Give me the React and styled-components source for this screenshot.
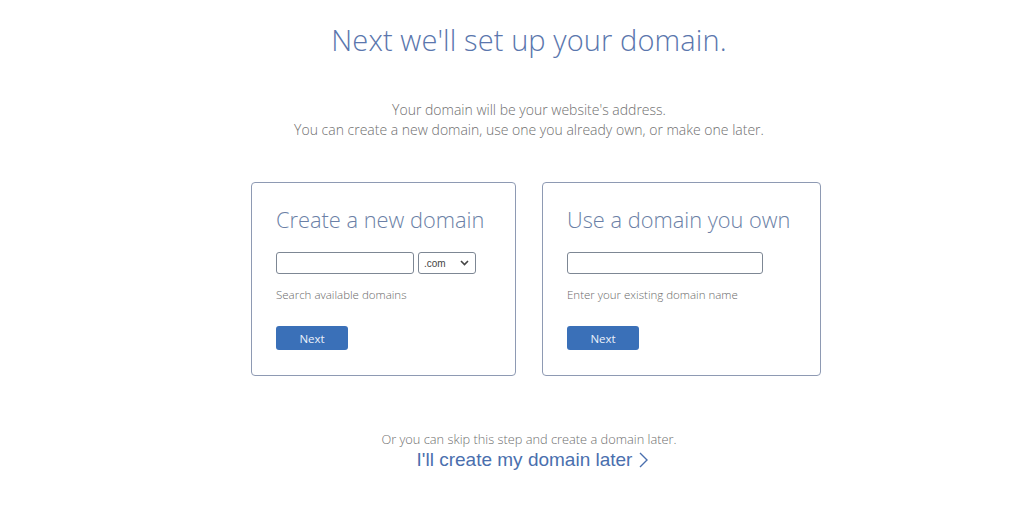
import React from "react";
import styled, { createGlobalStyle } from "styled-components";

const GlobalStyle = createGlobalStyle`
  html, body {
    margin: 0;
    padding: 0;
    background: #ffffff;
  }
  body {
    font-family: "Open Sans", "Liberation Sans", sans-serif;
  }
  * {
    box-sizing: border-box;
  }
`;

function DomainCard({ title, helper, withSelect, inputWidth, width }) {
  return (
    <Card $width={width}>
      <CardTitle>{title}</CardTitle>
      <Fields>
        <TextInput type="text" $width={inputWidth} />
        {withSelect && (
          <SelectBox>
            <span>.com</span>
            <svg width="9" height="6" viewBox="0 0 9 6">
              <path
                d="M1 1l3.5 3.5L8 1"
                fill="none"
                stroke="#444"
                strokeWidth="1.6"
              />
            </svg>
          </SelectBox>
        )}
      </Fields>
      <Helper>{helper}</Helper>
      <NextButton>Next</NextButton>
    </Card>
  );
}

export default function App() {
  return (
    <>
      <GlobalStyle />
      <Page>
        <Heading>Next we'll set up your domain.</Heading>
        <Intro>
          Your domain will be your website's address.
          <br />
          You can create a new domain, use one you already own, or make one
          later.
        </Intro>
        <Cards>
          <DomainCard
            title="Create a new domain"
            helper="Search available domains"
            withSelect
            inputWidth={138}
            width={265}
          />
          <DomainCard
            title="Use a domain you own"
            helper="Enter your existing domain name"
            inputWidth={196}
            width={279}
          />
        </Cards>
        <SkipText>Or you can skip this step and create a domain later.</SkipText>
        <LaterLink href="#">
          I'll create my domain later
          <svg width="10" height="18" viewBox="0 0 10 18">
            <path
              d="M2 2l7 7-7 7"
              fill="none"
              stroke="#4a6fae"
              strokeWidth="1.4"
            />
          </svg>
        </LaterLink>
      </Page>
    </>
  );
}

const Page = styled.div`
  width: 1024px;
  height: 523px;
  padding: 20px 0 0 34px;
  display: flex;
  flex-direction: column;
  align-items: center;
  overflow: hidden;
`;

const Heading = styled.h1`
  margin: 0;
  font-size: 29px;
  font-weight: 300;
  color: #5a76ad;
  line-height: 40px;
  letter-spacing: 0.1px;
`;

const Intro = styled.p`
  margin: 40px 0 0;
  font-size: 14px;
  font-weight: 300;
  line-height: 20px;
  color: #6f6f6f;
  text-align: center;
`;

const Cards = styled.div`
  margin: 42px 0 0;
  display: flex;
  gap: 26px;
  padding-left: 14px;
`;

const Card = styled.div`
  width: ${(p) => p.$width}px;
  height: 194px;
  padding: 23px 24px 0;
  border: 1px solid #8e9ab3;
  border-radius: 4px;
  display: flex;
  flex-direction: column;
  align-items: flex-start;
`;

const CardTitle = styled.h2`
  margin: 0;
  font-size: 21.8px;
  font-weight: 300;
  color: #6b7fa6;
  line-height: 28px;
  white-space: nowrap;
`;

const Fields = styled.div`
  display: flex;
  gap: 4px;
  margin-top: 18px;
`;

const TextInput = styled.input`
  width: ${(p) => p.$width}px;
  height: 22px;
  border: 1px solid #7d8794;
  border-radius: 3px;
  padding: 0 4px;
  background: #fff;
  outline: none;
`;

const SelectBox = styled.div`
  width: 58px;
  height: 22px;
  border: 1px solid #7d8794;
  border-radius: 3px;
  display: flex;
  align-items: center;
  justify-content: space-between;
  padding: 0 6px 0 5px;
  font-family: "Liberation Sans", Arial, sans-serif;
  font-size: 10px;
  color: #444;
`;

const Helper = styled.div`
  margin-top: 13px;
  font-size: 11.5px;
  font-weight: 300;
  color: #6a6a6a;
  line-height: 16px;
`;

const NextButton = styled.button`
  margin-top: 23px;
  width: 72px;
  height: 24px;
  border: none;
  border-radius: 3px;
  background: #3a70b8;
  color: #eaf1fa;
  font-family: "Open Sans", sans-serif;
  font-size: 11.5px;
  cursor: pointer;
`;

const SkipText = styled.p`
  margin: 55px 0 0;
  font-size: 12.8px;
  font-weight: 300;
  color: #6f6f6f;
  line-height: 16px;
`;

const LaterLink = styled.a`
  display: flex;
  align-items: center;
  gap: 6px;
  margin-top: 2px;
  padding-left: 7px;
  font-family: "Liberation Sans", Arial, sans-serif;
  font-size: 19px;
  color: #4a6fae;
  text-decoration: none;
  line-height: 22px;
`;
